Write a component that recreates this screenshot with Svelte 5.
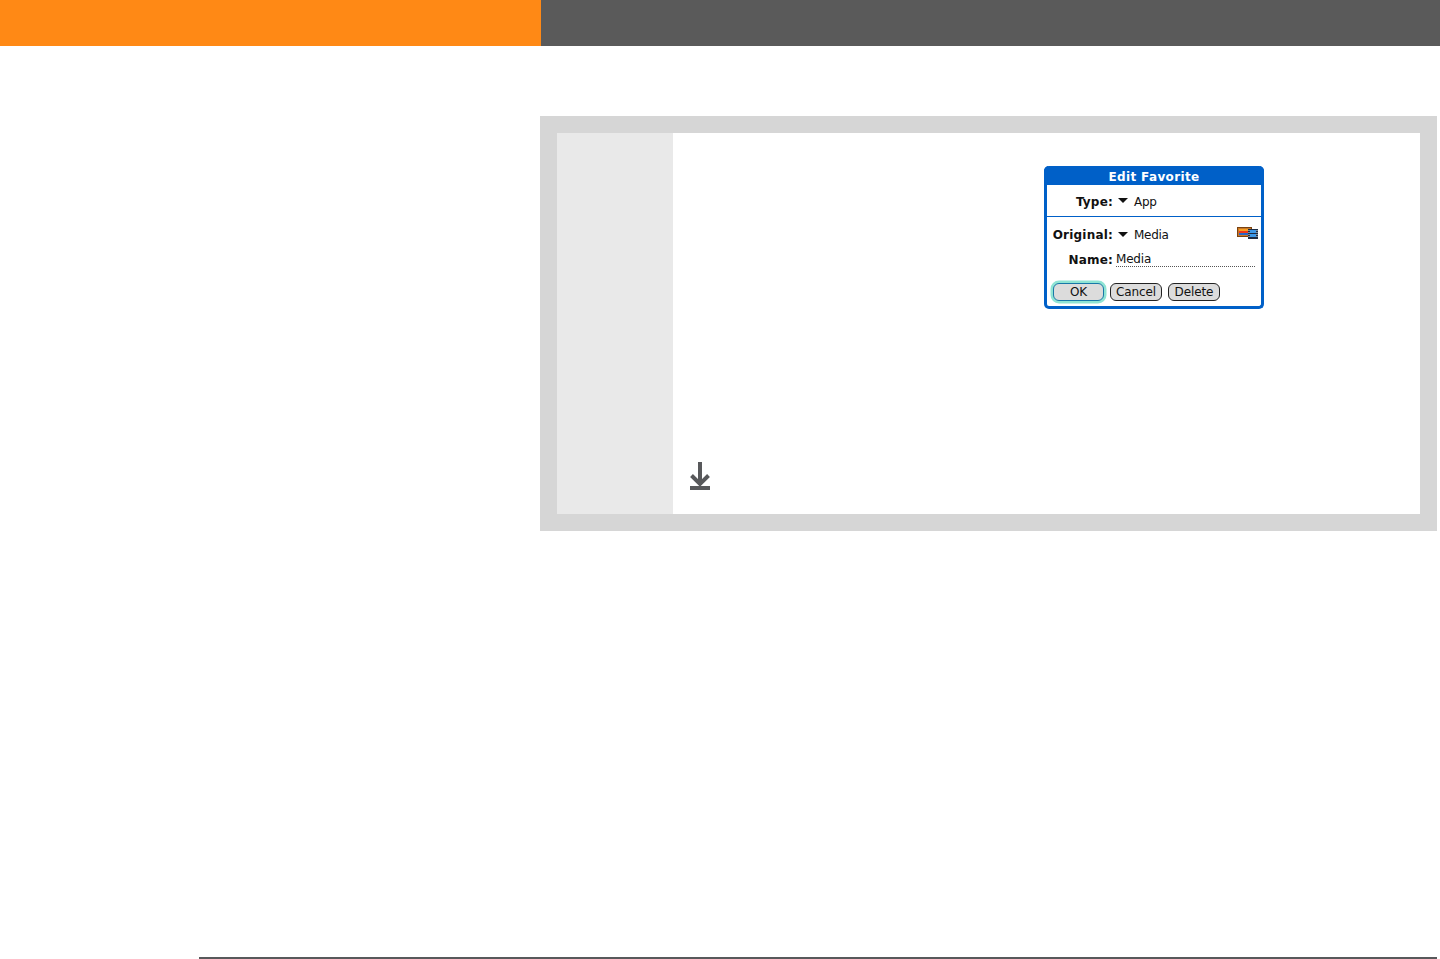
<script>
  const rows = [
    { label: 'Original:', value: 'Media' }
  ];
</script>

<div class="page">
  <header class="top">
    <div class="orange"></div>
    <div class="dark"></div>
  </header>

  <section class="panel">
    <div class="inner">
      <div class="side"></div>
      <div class="body">
        <div class="dialog">
          <div class="title">Edit Favorite</div>
          <div class="row type">
            <span class="label">Type:</span>
            <span class="tri"></span>
            <span class="value">App</span>
          </div>
          <div class="rule"></div>
          {#each rows as row}
            <div class="row orig">
              <span class="label">{row.label}</span>
              <span class="tri"></span>
              <span class="value">{row.value}</span>
              <svg class="media" width="21" height="12" viewBox="0 0 21 12">
                <rect x="0" y="0" width="15" height="10" fill="#7a4210" />
                <rect x="1" y="1" width="13" height="8" fill="#c87828" />
                <rect x="2" y="2" width="9" height="2" fill="#f8a020" />
                <rect x="2" y="4" width="9" height="2" fill="#f03818" />
                <rect x="2" y="6" width="9" height="2" fill="#2868c8" />
                <rect x="11" y="2" width="10" height="10" fill="#1c2c44" />
                <rect x="13" y="3" width="6" height="3" fill="#3c98e8" />
                <rect x="13" y="7" width="6" height="3" fill="#3c98e8" />
                <path d="M12 3v1M12 5v1M12 7v1M12 9v1M20 3v1M20 5v1M20 7v1M20 9v1" stroke="#d8e8f0" stroke-width="1" />
              </svg>
            </div>
          {/each}
          <div class="row name">
            <span class="label">Name:</span>
            <span class="field">Media</span>
          </div>
          <div class="buttons">
            <button class="ok">OK</button>
            <button class="cancel">Cancel</button>
            <button class="delete">Delete</button>
          </div>
        </div>

        <svg class="arrow" width="22" height="30" viewBox="0 0 22 30" fill="none">
          <path d="M11 1v23" stroke="#58595b" stroke-width="4" />
          <path d="M2.500 14.500 11 23l8.500-8.500" stroke="#58595b" stroke-width="4" />
          <rect x="1" y="25" width="20" height="4" fill="#58595b" />
        </svg>
      </div>
    </div>
  </section>

  <div class="foot"></div>
</div>

<style>
  :global(body){margin:0;background:#fff;font-family:"DejaVu Sans",sans-serif}
  .page{height:959px;display:flex;flex-direction:column}
  .top{display:flex;height:46px}
  .orange{width:541px;background:#ff8915}
  .dark{flex:1;background:#5a5a5a}
  .panel{margin:70px 3px 0 540px;padding:17px;background:#d6d6d6;height:381px;display:flex}
  .inner{flex:1;display:flex;background:#fff}
  .side{width:116px;background:#e9e9e9}
  .body{flex:1;display:flex;flex-direction:column;align-items:flex-start;padding:33px 0 23px 16px}
  .dialog{width:220px;height:143px;box-sizing:border-box;margin-left:355px;border:solid #0060c8;border-width:0 3px 3px;border-radius:5px;color:#111;font-size:12px;background:#fff}
  .title{height:19px;margin:0 -3px;background:#0060c8;color:#fff;font-weight:700;font-size:12px;line-height:23px;text-align:center;border-radius:5px 5px 0 0;letter-spacing:.35px}
  .row{display:flex;align-items:center;height:24px}
  .label{width:66px;text-align:right;font-weight:700;font-size:12px;letter-spacing:.2px;position:relative;top:1px}
  .tri{width:0;height:0;margin:0 5px 0 5px;border:solid transparent;border-width:5px 5.500px 0;border-top-color:#111}
  .value{font-size:12px;letter-spacing:-.3px;margin-left:1px;position:relative;top:1px}
  .type{height:31px}
  .rule{height:1px;background:#0060c8}
  .orig{height:34px;position:relative}
  .media{position:absolute;left:190px;top:10px}
  .name{height:17px}
  .name .label{top:0}
  .field{width:139px;margin-left:3px;border-bottom:1px dotted #555;line-height:14px;font-size:12px;letter-spacing:-.2px}
  .buttons{display:flex;gap:6px;margin:15px 0 0 7px;align-items:center}
  button{height:18px;padding:0 0 1px;border:1.500px solid #222;border-radius:6px;background:#dcdcdc;color:#111;font:12px "DejaVu Sans",sans-serif;letter-spacing:-.1px}
  .ok{width:51px;margin-left:-1px;border-color:#1878a8;box-shadow:0 0 0 2.500px #8fe4d4}
  .cancel{width:52px}
  .delete{width:52px}
  .arrow{margin-top:auto}
  .foot{margin:auto 3px 0 199px;height:2px;background:#58595b}
</style>
